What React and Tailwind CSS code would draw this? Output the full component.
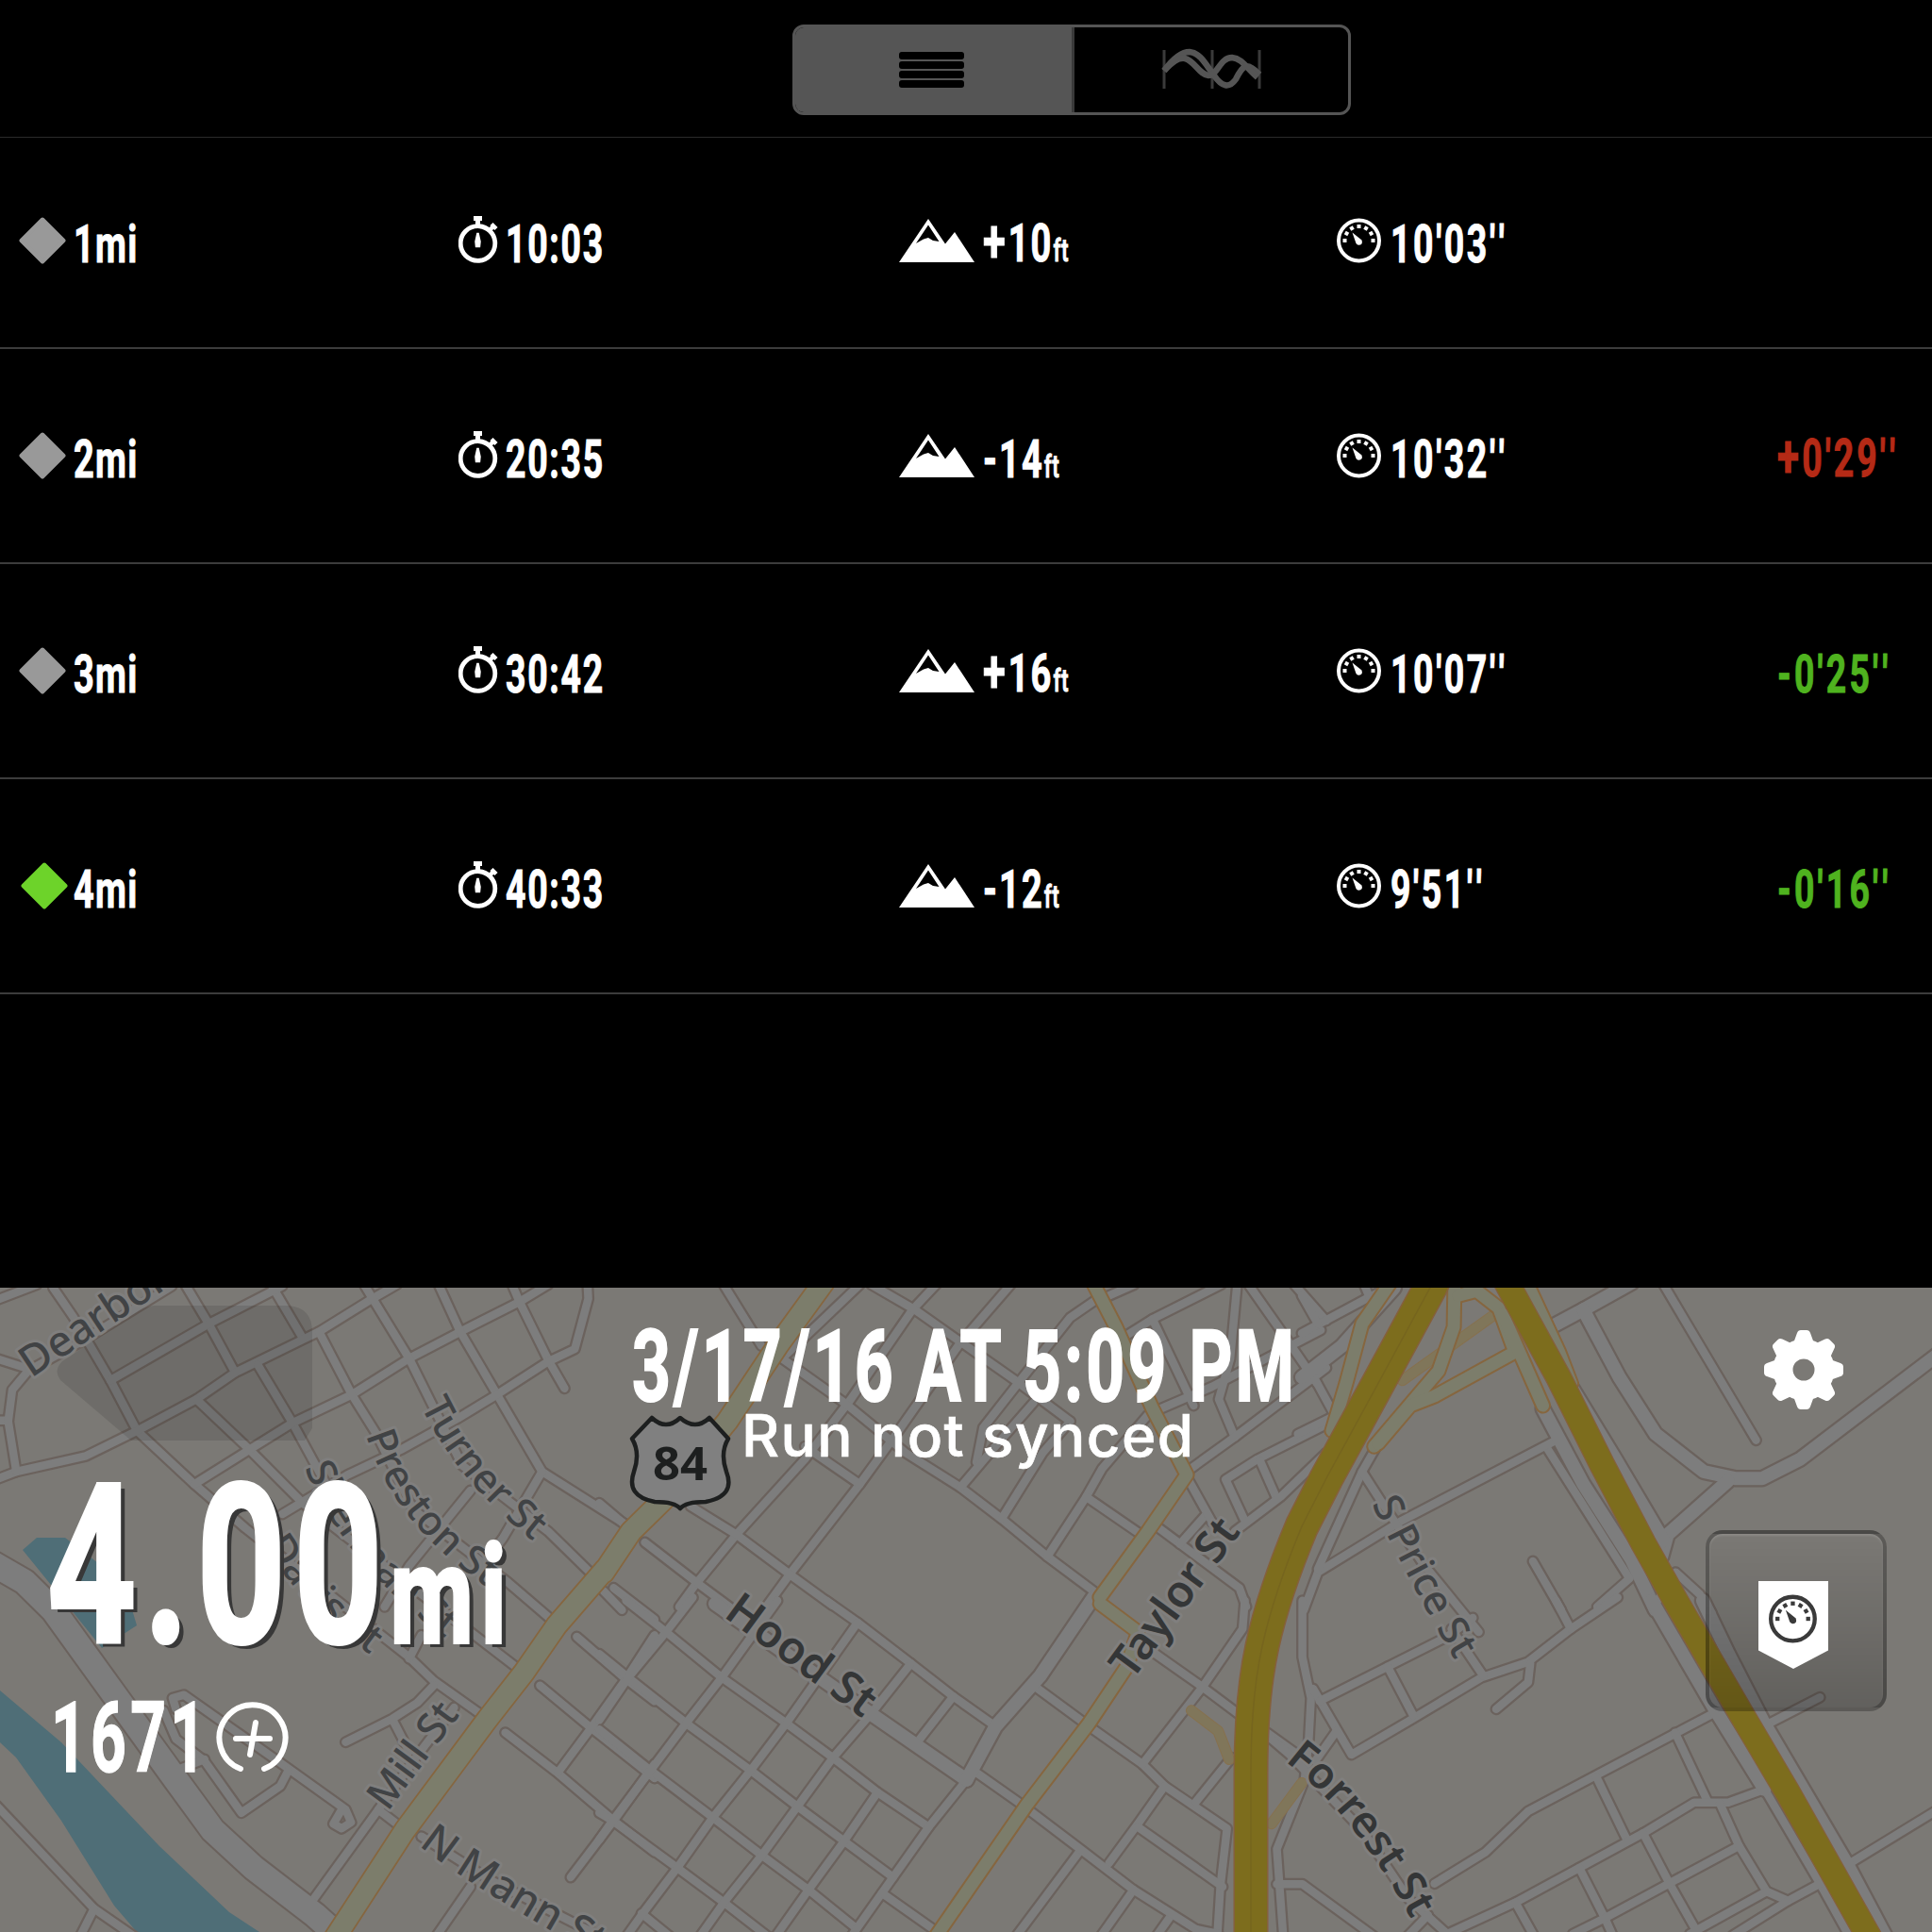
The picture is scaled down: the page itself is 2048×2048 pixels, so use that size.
import React from 'react';

const splits = [
  { mile: 1, time: '10:03', climb: '+10', pace: "10'03''", diff: '' },
  { mile: 2, time: '20:35', climb: '-14', pace: "10'32''", diff: "+0'29''" },
  { mile: 3, time: '30:42', climb: '+16', pace: "10'07''", diff: "-0'25''" },
  { mile: 4, time: '40:33', climb: '-12', pace: "9'51''", diff: "-0'16''", current: true },
];

// Each map tile keeps its roads in tile coordinates: origin and scale take them to the page.
const tiles = [
  {
    x: 0, y: 1360, sx: 2.306,
    roads: [
      [130, 15, 180, 110, 270, 310, 335, 470, 475, 640, 600, 780, 1000, 1190, 1060, 1265, 1190, 1385],
      [455, 10, 510, 130, 575, 285],
      [665, 10, 740, 175],
      [270, 310, 510, 130, 690, 10],
      [-10, 625, 40, 600, 210, 550, 335, 470, 480, 370, 575, 285, 740, 180, 780, 155, 910, 50, 970, 5],
      [480, 370, 610, 530, 740, 700, 1150, 1110, 1280, 1240],
      [630, 260, 715, 445, 780, 600, 820, 690],
      [475, 640, 610, 530, 715, 445, 860, 355, 1000, 240, 1125, 155, 1270, 60, 1340, 5],
      [780, 155, 860, 355, 920, 480, 1010, 720, 1240, 950, 1365, 1090],
      [890, 5, 1000, 240, 1050, 370, 1130, 580, 1340, 790, 1450, 930],
      [1072, 5, 1125, 155, 1215, 355, 1325, 600, 1550, 785],
      [1250, 0, 1270, 60, 1340, 245, 1380, 335],
      [1436, 0, 1438, 50, 1405, 210, 1340, 250, 1215, 355, 1120, 430, 980, 530, 850, 610, 690, 735],
      [1325, 600, 1230, 810, 1180, 900],
      [1150, 660, 1000, 900, 940, 1030],
      [1500, 970, 1600, 1070],
      [-10, 437, 20, 437],
      [75, 270, 30, 340, 20, 440, 40, 600],
      [-10, 240, 75, 275, 200, 185, 420, 10],
      [-10, 55, 90, 5],
    ],
  },
  {
    x: 0, y: 1700, sx: 2.306,
    roads: [
      [430, 335, 422, 300, 450, 290, 700, 520, 845, 655, 858, 695, 835, 715, 815, 700, 835, 655],
      [400, 340, 430, 430, 500, 500, 590, 665, 685, 580, 705, 530],
      [440, 525, 500, 495],
      [-10, 640, 230, 970, 330, 1060],
      [230, 970, 195, 1060],
      [755, 960, 925, 655, 1010, 500, 1110, 330],
      [925, 655, 985, 715],
      [960, 370, 1000, 470],
      [845, 440, 960, 365, 1020, 315, 1060, 260],
      [1000, 175, 1030, 100],
      [1410, 105, 1530, 240, 1600, 310],
      [1320, 260, 1445, 395, 1600, 555],
      [1235, 410, 1360, 535, 1500, 690, 1600, 790],
      [1600, 100, 1530, 240, 1445, 395, 1365, 535],
      [1600, 510, 1500, 690, 1395, 870],
      [1030, 740, 1200, 880, 1500, 1080],
      [1150, 900, 1065, 1060],
    ],
  },
  {
    x: 640, y: 1360, sx: 2.063,
    roads: [
      [262, 5, 345, 200],
      [730, 0, 675, 85, 540, 370, 440, 560, 290, 800, 200, 960, 165, 1030],
      [890, 5, 780, 190, 640, 480, 560, 640, 410, 920, 355, 1030],
      [560, 5, 470, 130, 390, 240],
      [585, 5, 680, 85, 900, 310, 1020, 440],
      [390, 240, 530, 385, 660, 540, 780, 650, 870, 750, 970, 870, 1085, 995],
      [440, 520, 560, 640],
      [1085, 45, 1020, 110, 900, 330, 830, 460, 815, 570],
      [1020, 440, 960, 540, 870, 750],
      [940, 380, 850, 530, 780, 650],
      [1190, 420, 1090, 590, 1055, 680, 970, 870],
      [1055, 680, 1175, 800],
      [1210, 775, 1390, 970, 1405, 1030],
      [1315, 740, 1260, 830],
      [1210, 405, 1330, 330, 1568, 150],
      [1090, 50, 1160, 5],
      [1145, 165, 1200, 115, 1350, 5],
      [1200, 115, 1290, 390],
      [1385, 5, 1370, 240, 1345, 370, 1380, 490],
      [1410, 5, 1480, 150, 1560, 320],
      [1510, 5, 1580, 120],
      [1275, 600, 1380, 490, 1580, 270],
      [1280, 630, 1330, 760],
      [1400, 750, 1360, 625, 1430, 560, 1580, 450],
      [1435, 565, 1470, 680],
      [1380, 790, 1480, 680, 1580, 540],
      [-10, 700, 55, 780],
      [90, 825, 210, 960, 275, 1030],
      [190, 710, 290, 800, 410, 930, 500, 1025],
      [0, 980, 40, 1040],
    ],
  },
  {
    x: 1380, y: 1360, sx: 2.347,
    roads: [
      [900, 5, 1130, 500],
      [610, 525, 815, 940, 735, 1030],
      [640, 495, 250, 755, 40, 920, 5, 1040],
      [190, 510, 150, 600, 100, 740, 40, 910],
      [150, 600, 200, 700, 300, 890, 440, 1110],
      [575, 885, 645, 1040],
      [0, 160, 160, 50, 230, 5],
      [0, 40, 40, 130],
      [155, 5, 170, 50],
      [30, 300, 90, 440],
      [-10, 480, 70, 430],
      [880, 1020, 930, 920, 990, 990, 1020, 1050],
    ],
  },
  {
    x: 640, y: 1700, sx: 2.119,
    roads: [
      [50, -10, 140, 90, 265, 235, 410, 380, 515, 490, 615, 600, 730, 710],
      [-10, 160, 55, 235, 185, 380, 330, 530, 435, 645, 540, 755, 650, 870],
      [-10, 400, 105, 530, 245, 680, 355, 800, 460, 910, 565, 1030],
      [-10, 665, 20, 690, 165, 840, 270, 950, 370, 1060],
      [85, 985, 150, 1060],
      [500, -10, 570, 60, 690, 190, 785, 295, 880, 390],
      [975, 270, 1090, 390, 1210, 510, 1260, 580, 1400, 715, 1385, 900, 1378, 1060],
      [1220, 140, 1345, 265, 1430, 355],
      [1490, 410, 1568, 490],
      [200, -20, 140, 90, 55, 235, -10, 370],
      [390, -10, 265, 235, 185, 380, 105, 530, 20, 690, -10, 750],
      [570, 60, 410, 380, 330, 530, 245, 680, 165, 840, 85, 990, 50, 1060],
      [690, 190, 600, 350, 515, 490, 435, 645, 355, 800, 270, 950, 215, 1060],
      [785, 295, 710, 430],
      [615, 600, 540, 755, 460, 910, 385, 1060],
      [815, 560, 730, 710, 650, 870, 555, 1060],
      [625, 920, 740, 1035],
      [1440, -10, 1435, 80, 1345, 265, 1210, 510],
      [1260, 580, 1200, 700, 1135, 825],
      [1410, 490, 1330, 630],
      [1200, 710, 1390, 900],
      [1070, 785, 925, 1060],
      [1190, 910, 1115, 1060],
      [1275, 990, 1240, 1060],
      [840, 540, 940, 640, 1070, 780, 1190, 910, 1330, 1035, 1380, 1050],
    ],
  },
  {
    x: 1340, y: 1700, sx: 2.215,
    roads: [
      [90, -10, 90, 170, 110, 300, 105, 430, 95, 560, 30, 780, 45, 1060],
      [115, 270, 205, 480, 350, 365, 510, 235, 620, 185, 720, 80, 830, -20],
      [130, 310, 290, 200, 430, 105, 490, 45],
      [290, 200, 350, 355],
      [440, 80, 515, 230],
      [685, -10, 720, 80],
      [625, 190, 620, 250, 545, 335],
      [170, 405, 120, 500],
      [0, 410, 60, 480, 230, 720, 340, 940, 430, 1050],
      [30, 892, 90, 892, 260, 1060],
      [400, 890, 520, 790, 620, 660, 780, 545, 1060, 345],
      [1175, 590, 1305, 890, 1375, 1060],
      [965, 410, 1040, 625],
      [780, 550, 850, 745],
      [430, 1050, 590, 950, 740, 840, 890, 730, 1010, 632, 1090, 632, 1175, 590],
      [740, 840, 800, 1000, 820, 1060],
      [890, 730, 950, 885, 1015, 1040],
      [725, 1050, 800, 1000, 950, 890, 1115, 770],
      [1070, 635, 1115, 770, 1180, 915, 1230, 945, 1305, 890],
      [1180, 915, 1000, 1050],
      [1230, 945, 1100, 1055],
      [590, 950, 635, 1060],
      [1180, 385, 1305, 298],
      [1370, 830, 1600, 640],
      [385, 990, 335, 1060],
    ],
  },
];

function toPath(tile, pts) {
  let d = '';
  for (let i = 0; i < pts.length; i += 2) {
    const px = (tile.x + pts[i] / tile.sx).toFixed(1);
    const py = (tile.y + pts[i + 1] / 3).toFixed(1);
    d += `${i ? 'L' : 'M'}${px} ${py}`;
  }
  return d;
}

const streets = tiles.flatMap((t) => t.roads.map((r) => toPath(t, r)));

const [nw, sw, n, ne, s, se] = tiles;
const avenues = [
  toPath(ne, [620, 140, 700, 85, 820, 0]),
  toPath(ne, [700, 85, 790, 300, 880, 480, 1000, 600, 1080, 622, 1145, 622, 1240, 560, 1600, 210]),
  toPath(ne, [1060, 630, 910, 800, 895, 870]),
  toPath(ne, [670, 330, 780, 560, 900, 820]),
  toPath(ne, [600, 400, 700, 640, 820, 880, 880, 1040]),
  toPath(ne, [0, 300, 100, 200, 230, 15]),
  toPath(se, [910, -10, 1060, 340, 1175, 590]),
  toPath(se, [1030, -10, 1090, 160, 1170, 370, 1370, 830, 1460, 1060]),
  toPath(s, [250, 0, 600, 350, 815, 560]),
  toPath(s, [1100, -20, 980, 230, 880, 390, 815, 560]),
];
const riverRoad = [toPath(nw, [-20, 890, 60, 950, 130, 1040, 280, 1310, 430, 1580, 520, 1740, 620, 1860, 770, 2010, 830, 2080])];

const trunks = [
  toPath(sw, [820, 1060, 990, 720, 1190, 370, 1280, 220, 1360, 70, 1440, -50, 1480, -110]) +
    toPath(n, [0, 920, 60, 790, 130, 690, 270, 440, 380, 200, 480, 0]),
];
const minorTrunks = [
  toPath(n, [1070, 0, 1120, 140, 1200, 400, 1275, 610, 1190, 790, 1085, 1000]) +
    toPath(s, [1115, 0, 1200, 90, 1175, 200, 1090, 380, 950, 640, 745, 1060]),
  toPath(ne, [380, 0, 378, 140, 340, 280, 180, 520]),
  toPath(ne, [390, 40, 435, 25, 490, 80, 530, 220, 330, 360, 270, 390, 190, 510]),
  toPath(ne, [220, 0, 150, 130, 110, 320, 75, 470]),
  toPath(ne, [560, 0, 640, 220, 670, 320]),
  toPath(ne, [500, 100, 600, 390]),
];
const ramps = [
  toPath(s, [1320, 340, 1380, 405, 1405, 495]),
  toPath(s, [1568, 570, 1500, 700]),
  toPath(ne, [250, 310, 480, 100]),
];
const highway = 'M1523 1350L1516 1365L1459 1470L1406 1567L1380 1618Q1350 1690 1338 1745Q1326 1800 1326 1880L1326 2060';
const highway2 = 'M1592 1350L1600 1365L1652 1460L1698 1552L1742 1636L1778 1700L1846 1817L1895 1900L1985 2060';

const labels = [
  { id: 'dearborn', d: 'M33 1461L240 1324', text: 'Dearborn St', size: 45 },
  { id: 'turner', d: 'M446 1490Q490 1582 590 1652L640 1687', text: 'Turner St', size: 43 },
  { id: 'preston', d: 'M388 1521Q422 1630 545 1700L600 1731', text: 'Preston St', size: 43 },
  { id: 'sherman', d: 'M323 1556Q366 1665 500 1757L560 1799', text: 'Sherman St', size: 43 },
  { id: 'davis', d: 'M280 1638Q325 1714 430 1779L480 1809', text: 'Davis St', size: 43 },
  { id: 'mill', d: 'M411 1921L510 1787', text: 'Mill St', size: 44 },
  { id: 'mann', d: 'M444 1956Q500 2002 680 2100L740 2130', text: 'N Mann St', size: 45 },
  { id: 'hood', d: 'M766 1713L990 1877', text: 'Hood St', size: 48, bold: true },
  { id: 'taylor', d: 'M1200 1782L1350 1577', text: 'Taylor St', size: 47, bold: true },
  { id: 'price', d: 'M1454 1594Q1505 1700 1570 1806L1600 1852', text: 'S Price St', size: 43 },
  { id: 'forrest', d: 'M1362 1867Q1440 1925 1507 2055L1530 2094', text: 'Forrest St', size: 46, bold: true },
  { id: 'edge', d: 'M-20 1400L20 1375', text: 't', size: 42 },
];

function Roads({ paths, outer, inner, casing, fill }) {
  return (
    <g fill="none" strokeLinecap="round" strokeLinejoin="round">
      {paths.map((d, i) => <path key={i} d={d} stroke={casing} strokeWidth={outer} />)}
      {paths.map((d, i) => <path key={`f${i}`} d={d} stroke={fill} strokeWidth={inner} />)}
    </g>
  );
}

function StreetMap() {
  const grey = [
    ...streets.map((d) => [d, 13, 8.5]),
    ...avenues.map((d) => [d, 18.5, 14]),
    ...riverRoad.map((d) => [d, 30, 26]),
  ];
  return (
    <svg className="absolute inset-0 h-full w-full" viewBox="0 1365 2048 683">
      <rect y="1365" width="2048" height="683" fill="#7b7975" />
      <g fill="#4f6e77">
        <path d="M24 1643L39 1630H69L104 1657L139 1703L145 1723L108 1747L54 1680Z" />
        <path d="M0 1792L65 1847L169 1957L243 2027L275 2048H145L121 2020L65 1930L17 1863L0 1847Z" />
      </g>
      <g fill="none" strokeLinecap="round" strokeLinejoin="round">
        {grey.map(([d, w], i) => <path key={i} d={d} stroke="#6b625d" strokeWidth={w} />)}
        {grey.map(([d, , w], i) => <path key={`f${i}`} d={d} stroke="#7d7d7d" strokeWidth={w} />)}
      </g>
      <Roads paths={ramps} outer={12} inner={10} casing="#86714f" fill="#80765a" />
      <Roads paths={minorTrunks} outer={17} inner={13} casing="#86663f" fill="#7c7d6b" />
      <Roads paths={trunks} outer={25} inner={21.5} casing="#86663f" fill="#7c7d6b" />
      <Roads paths={[highway]} outer={37} inner={34} casing="#85603c" fill="#7d6d1d" />
      <path d={highway} fill="none" stroke="#76651e" strokeWidth="1.5" />
      <Roads paths={[highway2]} outer={28} inner={25.5} casing="#85603c" fill="#7d6d1d" />

      {labels.map((l) => (
        <g key={l.id}>
          <path id={l.id} d={l.d} fill="none" />
          <text
            fontFamily="'Noto Sans', sans-serif"
            fontSize={l.size}
            fontWeight={l.bold ? 600 : 500}
            fill={l.bold ? '#343637' : '#414345'}
            stroke="#807f7e"
            strokeWidth="6"
            strokeLinejoin="round"
            paintOrder="stroke"
          >
            <textPath href={`#${l.id}`}>{l.text}</textPath>
          </text>
        </g>
      ))}

      {/* US route shield */}
      <path
        d="M691 1503Q706 1517 721 1503Q737 1517 752 1503L772 1525Q763 1540 770 1560Q780 1586 748 1592Q727 1592 721 1599Q715 1592 694 1592Q663 1586 672 1560Q679 1540 670 1525Z"
        fill="#808080"
        stroke="#1d1f1f"
        strokeWidth="4.5"
        strokeLinejoin="round"
      />
      <text x="721" y="1569" textAnchor="middle" fontFamily="'Open Sans', sans-serif" fontSize="49" fontWeight="700" fill="#1d1f1f" textLength="58" lengthAdjust="spacingAndGlyphs">84</text>
      <path d="M163 1384H306Q331 1386 331 1412V1514L323 1527H139L64 1463Q56 1453 66 1443L143 1392Q152 1385 163 1384Z" fill="#000" opacity=".1" />
    </svg>
  );
}

function Stopwatch() {
  return (
    <svg className="h-[50px] w-[44px]" viewBox="0 0 44 50" fill="none" stroke="#fff">
      <circle cx="20.5" cy="29" r="18.300" strokeWidth="4.800" />
      <path d="M16 2.5h9M20.500 3v8" strokeWidth="5" />
      <path d="M33 15l4-4M35 8.500l5 5" strokeWidth="4.500" />
      <path d="M20.500 18l-2 9 .5 5h3l.5-5z" fill="#fff" strokeWidth="2.500" />
    </svg>
  );
}

function Mountains() {
  return (
    <svg className="h-[46px] w-[80px]" viewBox="0 0 80 46">
      <path fill="#fff" fillRule="evenodd" d="M0 46L31 0L49 26.500L59 14L80 46zM31 6.500L18 26l8-4.500 5-1.500 5 3 6.500 1z" />
    </svg>
  );
}

function Gauge({ className }) {
  const ticks = [-90, -60, -30, 0, 30, 60, 90];
  return (
    <svg className={className} viewBox="0 0 48 48" fill="none" stroke="currentColor">
      <circle cx="23.500" cy="24" r="21.500" strokeWidth="4" />
      {ticks.map((a) => (
        <rect key={a} x="21.500" y="7" width="4" height="4" fill="currentColor" stroke="none" transform={`rotate(${a} 23.5 24)`} />
      ))}
      <path d="M16.500 15.500L26.500 23.500Q28 28.500 23.500 28.800Q20.500 28.500 19.800 25z" fill="currentColor" stroke="none" />
    </svg>
  );
}

function Diamond({ current }) {
  return (
    <svg className={`h-[50px] w-[50px] ${current ? 'ml-[2px]' : ''}`} viewBox="0 0 50 50">
      <path
        d="M25 2.500L47.500 25L25 47.500L2.500 25Z"
        fill={current ? '#6dd32a' : '#999'}
        stroke={current ? '#6dd32a' : '#999'}
        strokeWidth="4"
        strokeLinejoin="round"
      />
    </svg>
  );
}

// Condensed bold face used for every number
function Narrow({ className = '', children }) {
  return <span className={`block origin-left whitespace-nowrap font-bold leading-none ${className}`}>{children}</span>;
}

function SplitRow({ split }) {
  const { mile, time, climb, pace, diff, current } = split;
  return (
    <div className="grid h-[228px] grid-cols-[466px_466px_465px_467px_1fr] items-end border-b-2 border-[#3c3c3c] pb-[81px] pl-[20px] text-[55px] [-webkit-text-stroke:1px_currentColor] first:h-[224px]">
      <div className="flex items-end">
        <div className="w-[58px] pb-[7px]"><Diamond current={current} /></div>
        <Narrow className="scale-x-[.69] tracking-[.035em]">{`${mile}mi`}</Narrow>
      </div>
      <div className="flex items-end">
        <div className="w-[50px] pb-[8px]"><Stopwatch /></div>
        <Narrow className="scale-x-[.68] tracking-[.045em]">{time}</Narrow>
      </div>
      <div className="flex items-end">
        <div className="w-[90px] pb-[9px] pl-[1px]"><Mountains /></div>
        <Narrow className="scale-x-[.69] tracking-[.055em]">
          {climb.startsWith('+') ? <span className="text-[63px] leading-none tracking-[.07em]">+</span> : '-'}
          {climb.slice(1)}<span className="text-[33px] font-medium tracking-[.02em]">ft</span>
        </Narrow>
      </div>
      <div className="flex items-end">
        <div className="w-[57px] pb-[8px]"><Gauge className="h-[48px] w-[48px]" /></div>
        <Narrow className="scale-x-[.68] tracking-[.07em]">{pace.slice(0, -2)}<span className="tracking-[.13em]">''</span></Narrow>
      </div>
      {diff.startsWith('+') ? (
        <Narrow className="scale-x-[.68] tracking-[.08em] text-[#b52a16]"><span className="text-[63px] leading-none">+</span>{diff.slice(1, -2)}<span className="tracking-[.14em]">''</span></Narrow>
      ) : (
        <Narrow className="scale-x-[.68] tracking-[.085em] text-[#4fb31f]">{diff.slice(0, -2)}<span className="tracking-[.14em]">{diff.slice(-2)}</span></Narrow>
      )}
    </div>
  );
}

function ViewSwitch() {
  return (
    <div className="flex h-[96px] w-[592px] overflow-hidden rounded-xl border-[3px] border-[#555]">
      <div className="flex w-[293px] flex-col items-center justify-center gap-[2px] bg-[#555] pr-[5px]">
        {[0, 1, 2, 3].map((i) => <div key={i} className="h-[8px] w-[69px] rounded-[3px] bg-black" />)}
      </div>
      <div className="flex flex-1 items-center justify-center border-l-[3px] border-[#3a3a3a]">
        <svg className="h-[48px] w-[110px]" viewBox="1230 50 110 48" fill="none" stroke="#555">
          <path d="M1235 53v41M1286 53v41M1336 53v41" strokeWidth="3" stroke="#3a3a3a" />
          <path d="M1235 75C1246 60 1254 55 1262 55C1274 56 1280 70 1288 80C1296 92 1304 94 1311 84C1318 70 1322 64 1336 79" strokeWidth="6.500" />
          <path d="M1235 75C1244 65 1250 61 1257 62C1267 64 1272 79 1282 80C1292 80 1294 61 1307 61C1318 62 1322 72 1334 82" strokeWidth="6.500" />
        </svg>
      </div>
    </div>
  );
}

function Gear() {
  return (
    <svg className="h-[84px] w-[84px]" viewBox="-42 -42 84 84">
      <g fill="#fff">
        {[0, 45, 90, 135, 180, 225, 270, 315].map((a) => (
          <path key={a} d="M-11 -28L-7 -39Q-6 -42 -3 -42H3Q6 -42 7 -39L11 -28Z" transform={`rotate(${a})`} />
        ))}
      </g>
      <circle r="22" fill="none" stroke="#fff" strokeWidth="21" />
    </svg>
  );
}

export default function App() {
  return (
    <div className="flex h-[2048px] w-[2048px] flex-col overflow-hidden bg-black font-['Roboto','Liberation_Sans',sans-serif] text-white">
      <header className="flex h-[146px] items-start border-b border-[#2a2a2a] pl-[840px] pt-[26px]">
        <ViewSwitch />
      </header>
      <main className="h-[1219px]">
        {splits.map((s) => <SplitRow key={s.mile} split={s} />)}
      </main>

      <section className="relative h-[683px] overflow-hidden">
        <StreetMap />
        <div className="relative grid h-full grid-cols-[670px_1fr_240px]">
          <div className="pl-[50px] pt-[178px]">
            <Narrow className="scale-x-[.7] text-[235px] tracking-[.05em] [-webkit-text-stroke:4px_currentColor] [text-shadow:8px_5px_0_#383838]">
              4.00<span className="text-[145px] tracking-[.08em]">mi</span>
            </Narrow>
            <div className="flex items-start pl-[4px] pt-[13px]">
              <div className="w-[175px]"><Narrow className="scale-x-[.64] text-[103px] tracking-[.065em] [-webkit-text-stroke:1.5px_currentColor]">1671</Narrow></div>
              <svg className="mt-[13px] h-[76px] w-[78px]" viewBox="0 0 78 76" fill="none" stroke="#fff" strokeWidth="6" strokeLinecap="round">
                <path d="M26 71A35 35 0 1 1 51 71" />
                <path d="M21 39H57M42 22L36 56" />
              </svg>
            </div>
          </div>
          <div className="pt-[32px]">
            <Narrow className="scale-x-[.68] text-[105px] tracking-[.044em] [-webkit-text-stroke:2px_currentColor]">3/17/16 AT 5:09 PM</Narrow>
            <div className="-mt-[18px] pl-[116px] font-['Inter',sans-serif] text-[62px] font-medium leading-[76px] tracking-[.023em] [-webkit-text-stroke:.6px_currentColor]">Run not synced</div>
          </div>
          <div className="flex flex-col items-end pr-[48px] pt-[45px]">
            <div className="mr-[46px]"><Gear /></div>
            <div className="mt-[128px] flex h-[192px] w-[192px] justify-center rounded-[18px] border-4 border-black/25 bg-linear-to-b from-black/0 to-black/20 pr-[6px] pt-[50px] shadow-[inset_0_2px_2px_rgba(255,255,255,.12)]">
              <div className="flex h-[93px] w-[74px] justify-center bg-white pt-[14px] text-[#3a3a3a] [clip-path:polygon(0_0,100%_0,100%_79%,50%_100%,0_79%)]">
                <Gauge className="h-[52px] w-[52px]" />
              </div>
            </div>
          </div>
        </div>
      </section>
    </div>
  );
}
